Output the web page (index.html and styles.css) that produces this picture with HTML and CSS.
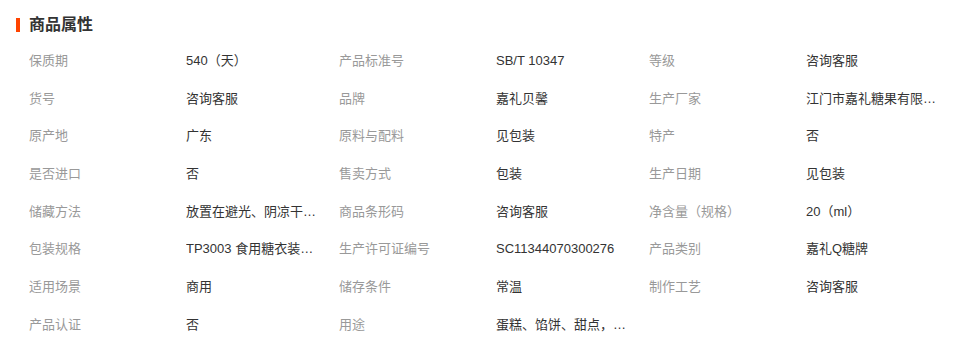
FILE: index.html
```html
<!DOCTYPE html>
<html lang="zh">
<head>
<meta charset="utf-8">
<link rel="stylesheet" href="styles.css">
</head>
<body>
<div class="attrs">
  <h2 class="title">商品属性</h2>
  <div class="grid">
    <div class="lbl">保质期</div><div class="val">540（天）</div>
    <div class="lbl">产品标准号</div><div class="val">SB/T 10347</div>
    <div class="lbl">等级</div><div class="val">咨询客服</div>

    <div class="lbl">货号</div><div class="val">咨询客服</div>
    <div class="lbl">品牌</div><div class="val">嘉礼贝馨</div>
    <div class="lbl">生产厂家</div><div class="val">江门市嘉礼糖果有限公司</div>

    <div class="lbl">原产地</div><div class="val">广东</div>
    <div class="lbl">原料与配料</div><div class="val">见包装</div>
    <div class="lbl">特产</div><div class="val">否</div>

    <div class="lbl">是否进口</div><div class="val">否</div>
    <div class="lbl">售卖方式</div><div class="val">包装</div>
    <div class="lbl">生产日期</div><div class="val">见包装</div>

    <div class="lbl">储藏方法</div><div class="val">放置在避光、阴凉干燥处</div>
    <div class="lbl">商品条形码</div><div class="val">咨询客服</div>
    <div class="lbl">净含量（规格）</div><div class="val">20（ml）</div>

    <div class="lbl">包装规格</div><div class="val">TP3003 食用糖衣装饰片</div>
    <div class="lbl">生产许可证编号</div><div class="val">SC11344070300276</div>
    <div class="lbl">产品类别</div><div class="val">嘉礼Q糖牌</div>

    <div class="lbl">适用场景</div><div class="val">商用</div>
    <div class="lbl">储存条件</div><div class="val">常温</div>
    <div class="lbl">制作工艺</div><div class="val">咨询客服</div>

    <div class="lbl">产品认证</div><div class="val">否</div>
    <div class="lbl">用途</div><div class="val">蛋糕、馅饼、甜点，烘焙装饰</div>
  </div>
</div>
</body>
</html>
```
FILE: styles.css
```css
* { box-sizing: border-box; }
html, body {
  margin: 0;
  padding: 0;
  background: #fff;
}
body {
  font-family: "Liberation Sans", "Noto Sans CJK SC", sans-serif;
  font-size: 13px;
  color: #333;
}
.attrs {
  padding: 15px 0 0 16px;
}
.title {
  margin: 0;
  font-size: 16px;
  font-weight: bold;
  color: #333;
  line-height: 20px;
  height: 20px;
  display: flex;
  align-items: center;
  gap: 9px;
}
.title::before {
  content: "";
  width: 4px;
  height: 14px;
  background: #ff4400;
}
.grid {
  display: grid;
  grid-template-columns: 157px 153px 157px 153px 157px 153px;
  grid-auto-rows: 37.7px;
  padding-left: 13px;
  margin-top: 7px;
}
.lbl, .val {
  white-space: nowrap;
  overflow: hidden;
  line-height: 18px;
  padding-top: 10px;
}
.lbl {
  color: #999;
}
.val {
  color: #333;
  padding-right: 22px;
  text-overflow: ellipsis;
}
```
